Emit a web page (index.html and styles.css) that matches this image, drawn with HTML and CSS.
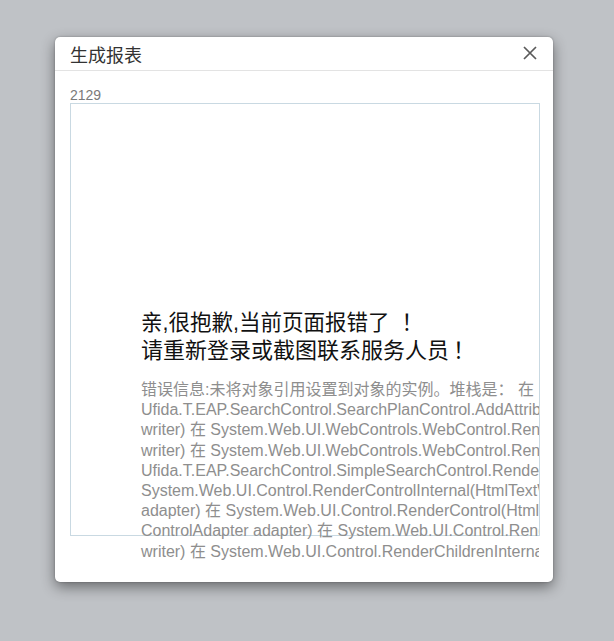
FILE: index.html
```html
<!DOCTYPE html>
<html lang="zh-CN">
<head>
<meta charset="utf-8">
<title>生成报表</title>
<link rel="stylesheet" href="styles.css">
</head>
<body>
<div class="dialog">
  <div class="dialog-header">
    <span class="dialog-title">生成报表</span>
    <span class="dialog-close" aria-label="关闭">
      <svg width="14" height="14" viewBox="0 0 14 14"><path d="M1 1 L13 13 M13 1 L1 13" stroke="#5a5a5a" stroke-width="1.7" fill="none"/></svg>
    </span>
  </div>
  <div class="dialog-body">
    <div class="report-id">2129</div>
    <div class="frame">
      <div class="msg-title">
        <div class="line-a">亲,很抱歉,当前页面报错了<span class="bang-a">！</span></div>
        <div class="line-b">请重新登录或截图联系服务人员<span class="bang-b">！</span></div>
      </div>
      <div class="msg-detail">
        <div>错误信息:未将对象引用设置到对象的实例。堆栈是： 在</div>
        <div>Ufida.T.EAP.SearchControl.SearchPlanControl.AddAttributesToRender(HtmlTextWriter</div>
        <div>writer) 在 System.Web.UI.WebControls.WebControl.RenderBeginTag(HtmlTextWriter</div>
        <div>writer) 在 System.Web.UI.WebControls.WebControl.Render(HtmlTextWriter writer) 在</div>
        <div>Ufida.T.EAP.SearchControl.SimpleSearchControl.Render(HtmlTextWriter writer) 在</div>
        <div>System.Web.UI.Control.RenderControlInternal(HtmlTextWriter writer, ControlAdapter</div>
        <div>adapter) 在 System.Web.UI.Control.RenderControl(HtmlTextWriter writer,</div>
        <div>ControlAdapter adapter) 在 System.Web.UI.Control.RenderControl(HtmlTextWriter</div>
        <div>writer) 在 System.Web.UI.Control.RenderChildrenInternal(HtmlTextWriter</div>
      </div>
    </div>
  </div>
</div>
</body>
</html>
```
FILE: styles.css
```css
html, body {
  margin: 0;
  padding: 0;
}
body {
  background: #bfc2c6;
  font-family: "Liberation Sans", "Noto Sans CJK SC", sans-serif;
  padding-top: 37px;
  padding-left: 55px;
  height: 641px;
  box-sizing: border-box;
  overflow: hidden;
}
.dialog {
  width: 498px;
  height: 545px;
  background: #fff;
  border-radius: 5px;
  box-shadow: 0 5px 14px rgba(0, 0, 0, 0.45), 0 0 2px rgba(0, 0, 0, 0.3);
  box-sizing: border-box;
}
.dialog-header {
  height: 34px;
  border-bottom: 1px solid #e3e3e3;
  box-sizing: border-box;
  display: flex;
  align-items: center;
  justify-content: space-between;
  padding: 0 16px 0 15px;
}
.dialog-title {
  font-family: "Noto Sans CJK SC", sans-serif;
  font-size: 18px;
  color: #333;
  line-height: 20px;
}
.dialog-close {
  display: flex;
  width: 14px;
  height: 14px;
  margin-top: -2px;
}
.dialog-body {
  padding: 16px 0 0 15px;
}
.report-id {
  font-size: 14px;
  line-height: 16px;
  color: #7a7a7a;
}
.frame {
  width: 470px;
  height: 433px;
  box-sizing: border-box;
  border: 1px solid #c9d9e2;
  padding: 205px 0 0 70px;
  overflow-x: clip;
  overflow-y: visible;
}
.msg-title {
  line-height: 28px;
  color: #111;
  white-space: nowrap;
}
.line-a {
  font-size: 21.5px;
}
.line-b {
  font-size: 22px;
}
.bang-a {
  margin-left: 12px;
}
.bang-b {
  margin-left: 4px;
}
.msg-detail {
  margin-top: 15px;
  font-size: 16px;
  line-height: 20.2px;
  color: #8e8e8e;
  white-space: nowrap;
}
```
